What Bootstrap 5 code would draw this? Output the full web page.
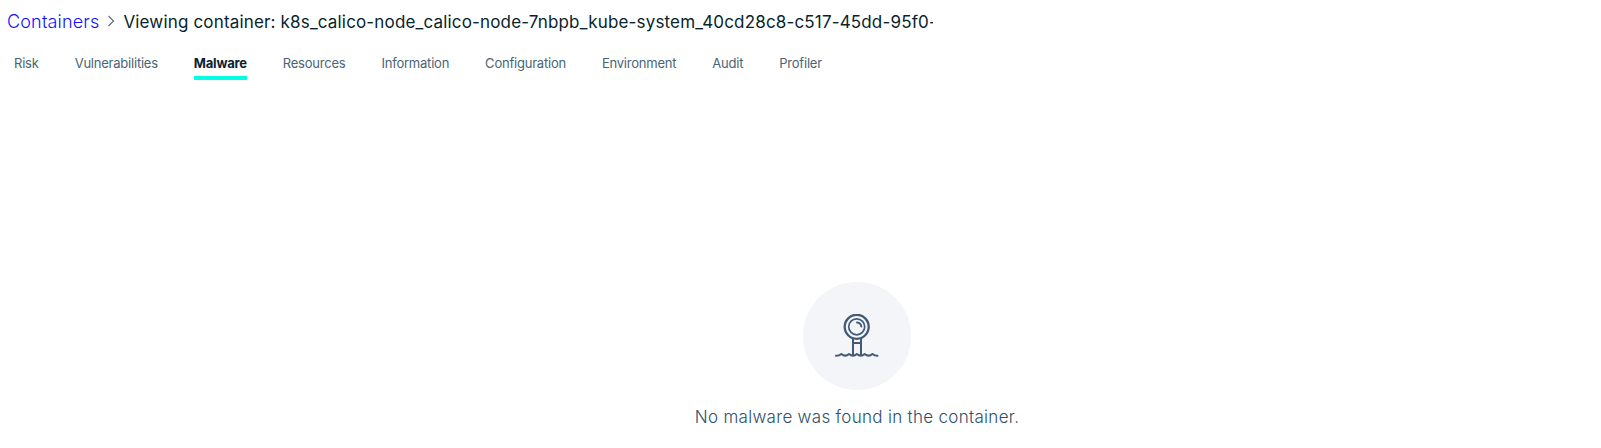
<!DOCTYPE html>
<html lang="en">
<head>
<meta charset="utf-8">
<meta name="viewport" content="width=device-width, initial-scale=1">
<title>Container malware</title>
<link href="https://cdn.jsdelivr.net/npm/bootstrap@5.3.0/dist/css/bootstrap.min.css" rel="stylesheet">
<style>
body{font-family:Inter,"Liberation Sans",sans-serif;background:#fff;color:#07242d}
.crumbs{height:44px;padding-left:7px;font-size:18px;line-height:24px}
.crumb-link{color:#1010ff;font-weight:300;letter-spacing:.17px}
.crumb-sep{width:8px;height:12px;margin:0 8px 2px 8px}
.crumb-title{font-size:17px;letter-spacing:.165px;width:810px}
.tabs-row{padding-left:14px;gap:36px;height:36px}
.tabs-row .nav-link{padding:9px 0 0;height:36px;font-size:13px;line-height:20px;letter-spacing:-.22px;color:#4a6475;border-bottom:4px solid transparent}
.tabs-row .nav-link.active{color:#07242d;font-weight:700;border-color:#00ffe4}
.empty-state{padding:202px 0 0 113px}
.empty-disc{width:108px;height:108px;background:#f3f5f9}
.empty-text{margin-top:15px;font-size:17px;line-height:24px;letter-spacing:.3px;color:#30506b;font-weight:300}
</style>
</head>
<body>
<main>
  <header class="crumbs d-flex align-items-center text-nowrap">
    <a class="crumb-link text-decoration-none" href="#">Containers</a>
    <svg class="crumb-sep flex-shrink-0" viewBox="0 0 8 12" fill="none" stroke="#526a7a" stroke-width="1.1"><path d="M1.500 1 6.500 6 1.500 11"/></svg>
    <span class="crumb-title overflow-hidden">Viewing container: k8s_calico-node_calico-node-7nbpb_kube-system_40cd28c8-c517-45dd-95f0-</span>
  </header>
  <nav class="nav tabs-row flex-nowrap">
    <a class="nav-link" href="#">Risk</a>
    <a class="nav-link" href="#">Vulnerabilities</a>
    <a class="nav-link active" href="#">Malware</a>
    <a class="nav-link" href="#">Resources</a>
    <a class="nav-link" href="#">Information</a>
    <a class="nav-link" href="#">Configuration</a>
    <a class="nav-link" href="#">Environment</a>
    <a class="nav-link" href="#">Audit</a>
    <a class="nav-link" href="#">Profiler</a>
  </nav>
  <section class="empty-state d-flex flex-column align-items-center">
    <div class="empty-disc rounded-circle d-flex align-items-center justify-content-center">
      <svg width="44" height="44" viewBox="0 0 44 44" fill="none" stroke="#405a78" stroke-width="2" stroke-linecap="round" stroke-linejoin="round">
        <circle cx="21.700" cy="12.800" r="12" stroke-width="2.300"/>
        <circle cx="21.700" cy="12.800" r="8" stroke-width="1.700"/>
        <path d="M22 8.500q4 .4 4.300 4.200" stroke-width="1.800"/>
        <path d="M18 25V41M26 25V41M18 29H26"/>
        <path d="M1 41.800Q4.500 41.800 6.300 40Q10.200 43.200 14.100 40Q18 43.200 21.900 40Q25.800 43.200 29.700 40Q33.600 43.200 37.500 40Q39.500 41.800 42.500 41.800"/>
      </svg>
    </div>
    <div class="empty-text">No malware was found in the container.</div>
  </section>
</main>
<script src="https://cdn.jsdelivr.net/npm/bootstrap@5.3.0/dist/js/bootstrap.bundle.min.js"></script>
</body>
</html>
